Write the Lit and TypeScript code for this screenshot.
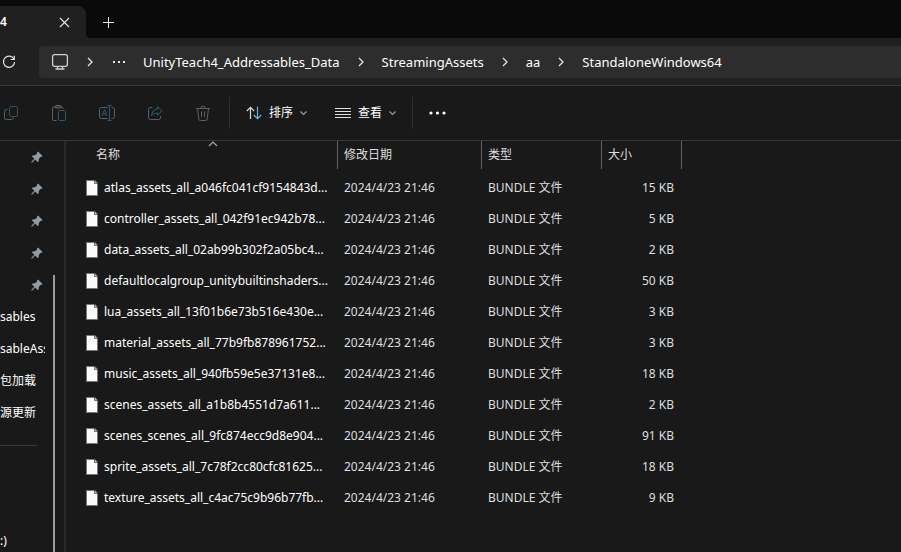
import { LitElement, html, css, svg } from "lit";
import { customElement } from "lit/decorators.js";

interface FileEntry {
  name: string;
  size: string;
}

const FILES: FileEntry[] = [
  { name: "atlas_assets_all_a046fc041cf9154843d...", size: "15 KB" },
  { name: "controller_assets_all_042f91ec942b78...", size: "5 KB" },
  { name: "data_assets_all_02ab99b302f2a05bc4...", size: "2 KB" },
  { name: "defaultlocalgroup_unitybuiltinshaders...", size: "50 KB" },
  { name: "lua_assets_all_13f01b6e73b516e430e...", size: "3 KB" },
  { name: "material_assets_all_77b9fb878961752...", size: "3 KB" },
  { name: "music_assets_all_940fb59e5e37131e8...", size: "18 KB" },
  { name: "scenes_assets_all_a1b8b4551d7a611...", size: "2 KB" },
  { name: "scenes_scenes_all_9fc874ecc9d8e904...", size: "91 KB" },
  { name: "sprite_assets_all_7c78f2cc80cfc81625...", size: "18 KB" },
  { name: "texture_assets_all_c4ac75c9b96b77fb...", size: "9 KB" },
];

const chevronRight = html`<svg class="chev" width="8" height="10" viewBox="0 0 8 10">
  <path d="M2 1 L6 5 L2 9" fill="none" stroke="#e6e6e6" stroke-width="1.3" />
</svg>`;

const chevronDown = html`<svg width="7" height="6" viewBox="0 0 7 6">
  <path d="M0.5 1.5 L3.5 4.5 L6.5 1.5" fill="none" stroke="#9a9a9a" stroke-width="1.2" />
</svg>`;

const icon = (label: string, body: unknown) => html`<button class="tool" aria-label=${label} disabled>
  <svg width="18" height="18" viewBox="0 0 18 18" fill="none" stroke="#606060" stroke-width="1">${body}</svg>
</button>`;

const pin = html`<svg class="pin" width="12" height="12" viewBox="0 0 12 12">
  <path d="M7 0.5 L11.5 5 L10.4 6 L9.4 6 L7.8 8 L7.6 10.4 L6.6 11 L4.2 8.6 L1 11.8 L0.2 11 L3.4 7.8 L1 5.4 L1.6 4.4 L4.2 4.2 L6.2 2.6 L6 1.4 Z" fill="#939da8" />
</svg>`;

const fileIcon = html`<svg class="file-icon" width="12" height="16" viewBox="0 0 12 16">
  <path d="M0.5 0.5 H8 L11.5 4 V15.5 H0.5 Z" fill="#fafafa" stroke="#777" />
  <path d="M8.5 0 V3.5 H12 Z" fill="#c9c9c9" stroke="#555" stroke-width="0.8" />
</svg>`;

@customElement("app-root")
export class AppRoot extends LitElement {
  static styles = css`
    :host {
      display: flex;
      flex-direction: column;
      min-height: 100vh;
      overflow: hidden;
      background: #191919;
      color: #fff;
      font-family: "Noto Sans", "Noto Sans CJK SC", sans-serif;
      font-size: 12px;
      line-height: 16px;
    }
    * {
      box-sizing: border-box;
    }
    svg {
      display: block;
      flex: none;
    }
    button {
      display: flex;
      align-items: center;
      padding: 0;
      border: 0;
      background: none;
      color: inherit;
      font: inherit;
    }
    .tabs {
      display: flex;
      align-items: flex-end;
      height: 38px;
      background: #0a0a0a;
    }
    .tab {
      display: flex;
      align-items: center;
      justify-content: space-between;
      width: 86px;
      height: 32px;
      padding-right: 16px;
      border-top-right-radius: 8px;
      background: #202020;
      font-weight: 600;
    }
    .flare {
      width: 4px;
      height: 4px;
      background: radial-gradient(circle at 100% 0, #0a0a0a 4px, #202020 4px);
    }
    .new-tab {
      width: 36px;
      height: 32px;
      justify-content: center;
    }
    .address-row {
      display: flex;
      align-items: center;
      height: 48px;
      padding-left: 2px;
      border-bottom: 1px solid #3a3a3a;
      background: #202020;
    }
    .address {
      display: flex;
      flex: 1;
      align-items: center;
      height: 32px;
      margin-left: 23px;
      padding-left: 12px;
      border-radius: 4px 0 0 4px;
      background: #2d2d2d;
      font-size: 13px;
    }
    .address a {
      color: inherit;
      text-decoration: none;
    }
    .chev {
      margin: 0 17px;
    }
    .dots {
      margin: 0 18px 0 2px;
    }
    .toolbar {
      display: flex;
      align-items: center;
      height: 55px;
      border-bottom: 1px solid #3a3a3a;
    }
    .tool {
      width: 48px;
      height: 32px;
      justify-content: center;
    }
    .tools {
      display: flex;
      margin: 0 2px 0 -13px;
    }
    .menu {
      gap: 7px;
      height: 32px;
      margin-left: 16px;
    }
    .menu + .menu {
      margin-left: 28px;
    }
    .rule {
      width: 1px;
      height: 32px;
      background: #2f2f2f;
    }
    .rule.end,
    .more {
      margin-left: 16px;
    }
    .body {
      display: flex;
      flex: 1;
    }
    .side {
      display: flex;
      width: 66px;
      border-right: 2px solid #292929;
    }
    .side-list {
      width: 45px;
      overflow: hidden;
      white-space: nowrap;
    }
    .side-item {
      display: flex;
      align-items: center;
      height: 32px;
    }
    .pin {
      margin-left: 31px;
    }
    .side hr {
      width: 37px;
      height: 1px;
      margin: 16px 0 79px;
      border: 0;
      background: #3a3a3a;
    }
    .thumb {
      width: 2px;
      margin: 134px 0 0 8px;
      background: #9a9a9a;
    }
    table {
      align-self: flex-start;
      table-layout: fixed;
      width: 616px;
      border-collapse: separate;
      border-spacing: 0;
      color: #dedede;
    }
    .c-name {
      width: 272px;
    }
    .c-date {
      width: 144px;
    }
    .c-type {
      width: 120px;
    }
    .c-size {
      width: 80px;
    }
    th {
      position: relative;
      height: 28px;
      padding: 0 6px;
      border-right: 1px solid #636363;
      text-align: left;
      font-weight: 400;
    }
    th.name {
      padding-left: 30px;
    }
    .sort {
      position: absolute;
      top: 0;
      left: 142px;
    }
    td {
      height: 31px;
      padding: 0 8px 0 6px;
      white-space: nowrap;
    }
    td.size {
      text-align: right;
    }
    .gap td {
      height: 3px;
    }
    .file {
      display: flex;
      align-items: center;
      gap: 6px;
      margin-right: -8px;
      padding-left: 14px;
      color: #fff;
    }
  `;

  render() {
    return html`
      <div class="tabs">
        <div class="tab">
          <span>4</span>
          <button aria-label="关闭">
            <svg width="11" height="11" viewBox="0 0 11 11"><path d="M1 1 L10 10 M10 1 L1 10" stroke="#e6e6e6" stroke-width="1.1" /></svg>
          </button>
        </div>
        <span class="flare"></span>
        <button class="new-tab" aria-label="新建标签页">
          <svg width="11" height="11" viewBox="0 0 11 11"><path d="M0 5.5 H11 M5.5 0 V11" stroke="#e6e6e6" /></svg>
        </button>
      </div>

      <div class="address-row">
        <button aria-label="刷新">
          <svg width="14" height="14" viewBox="0 0 14 14" fill="none" stroke="#e0e0e0" stroke-width="1.2">
            <path d="M12 4.2 A5.6 5.6 0 1 0 12.6 7" />
            <path d="M12.3 0.8 V4.5 H8.6" />
          </svg>
        </button>
        <nav class="address" aria-label="路径">
          <svg width="18" height="16" viewBox="0 0 18 16" fill="none" stroke="#d0d0d0" stroke-width="1.3">
            <rect x="1.6" y="0.7" width="14.8" height="11.6" rx="2" />
            <path d="M6.5 12.5 V15 M11.5 12.5 V15 M4.5 15 H13.5" />
          </svg>
          ${chevronRight}
          <svg class="dots" width="12" height="2" viewBox="0 0 12 2"><path d="M0 0h2v2H0zM5 0h2v2H5zM10 0h2v2h-2z" fill="#e6e6e6" /></svg>
          <a href="#data">UnityTeach4_Addressables_Data</a>
          ${chevronRight}
          <a href="#streaming">StreamingAssets</a>
          ${chevronRight}
          <a href="#aa">aa</a>
          ${chevronRight}
          <a href="#windows">StandaloneWindows64</a>
        </nav>
      </div>

      <div class="toolbar">
        <div class="tools">
          ${icon("复制", svg`<path d="M5.5 5.5 H4.5 a2 2 0 0 0 -2 2 V13.5 a2 2 0 0 0 2 2 H9.5 a2 2 0 0 0 2 -2" /><rect x="7.5" y="2.5" width="8" height="10" rx="2" stroke="#2c5873" />`)}
          ${icon("粘贴", svg`<path d="M6.5 16.5 H3.5 a1 1 0 0 1 -1 -1 V4 a1 1 0 0 1 1 -1 H12 a1 1 0 0 1 1 1 V5" /><rect x="5" y="1.5" width="6" height="2.5" rx="1" /><rect x="8.5" y="6.5" width="7" height="10" rx="1" stroke="#2c5873" />`)}
          ${icon("重命名", svg`<path d="M9.5 3.5 H3.5 a2 2 0 0 0 -2 2 V12.5 a2 2 0 0 0 2 2 H9.5 M13.5 3.5 H14.5 a2 2 0 0 1 2 2 V12.5 a2 2 0 0 1 -2 2 H13.5" /><path d="M4 12 L6.5 5.5 L9 12 M5 10 H8 M11.5 1.5 V16.5 M9.5 1.5 H13.5 M9.5 16.5 H13.5" stroke="#2c5873" />`)}
          ${icon("共享", svg`<path d="M6.5 3.5 H4.5 a2 2 0 0 0 -2 2 V13.5 a2 2 0 0 0 2 2 H12.5 a2 2 0 0 0 2 -2 V12" /><path d="M11.5 2.5 L16 7 L11.5 11 V9 C9 9 7 9.8 5.5 11.5 C6 8 7.6 5.2 11.5 5 Z" stroke="#2c5873" />`)}
          ${icon("删除", svg`<path d="M2 4.5 H16 M3.5 4.5 L4.8 15 a1.5 1.5 0 0 0 1.5 1.5 H11.7 a1.5 1.5 0 0 0 1.5 -1.5 L14.5 4.5 M7 4 a2 2 0 0 1 4 0 M7.5 7.5 V13 M10.5 7.5 V13" />`)}
        </div>
        <span class="rule"></span>
        <button class="menu">
          <svg width="16" height="14" viewBox="0 0 16 14" fill="none" stroke-width="1.2">
            <path d="M4.5 13 V1.5 M0.8 5 L4.5 1.3 L8.2 5" stroke="#d8d8d8" />
            <path d="M11.5 0.5 V12.5 M7.8 9 L11.5 12.7 L15.2 9" stroke="#5cb8ee" />
          </svg>
          排序 ${chevronDown}
        </button>
        <button class="menu">
          <svg width="16" height="11" viewBox="0 0 16 11"><path d="M0 0.5h16M0 3.5h16M0 6.5h16M0 9.5h16" stroke="#e0e0e0" /></svg>
          查看 ${chevronDown}
        </button>
        <span class="rule end"></span>
        <button class="more" aria-label="更多">
          <svg width="17" height="4" viewBox="0 0 17 4" fill="#fff"><circle cx="2" cy="2" r="1.6" /><circle cx="8.5" cy="2" r="1.6" /><circle cx="15" cy="2" r="1.6" /></svg>
        </button>
      </div>

      <div class="body">
        <aside class="side">
          <div class="side-list">
            ${[1, 2, 3, 4, 5].map(() => html`<div class="side-item">${pin}</div>`)}
            ${["sables", "sableAss", "包加载", "源更新"].map((t) => html`<div class="side-item">${t}</div>`)}
            <hr />
            <div class="side-item">:)</div>
          </div>
          <span class="thumb"></span>
        </aside>
        <table>
          <colgroup>
            <col class="c-name" /><col class="c-date" /><col class="c-type" /><col class="c-size" />
          </colgroup>
          <thead>
            <tr>
              <th class="name">名称
                <svg class="sort" width="10" height="6" viewBox="0 0 10 6"><path d="M1 5 L5 1 L9 5" fill="none" stroke="#a8a8a8" stroke-width="1.2" /></svg>
              </th>
              <th>修改日期</th>
              <th>类型</th>
              <th>大小</th>
            </tr>
          </thead>
          <tbody>
            <tr class="gap"><td colspan="4"></td></tr>
            ${FILES.map(
              (f) => html`<tr>
                <td><div class="file">${fileIcon}<span>${f.name}</span></div></td>
                <td>2024/4/23 21:46</td>
                <td>BUNDLE 文件</td>
                <td class="size">${f.size}</td>
              </tr>`
            )}
          </tbody>
        </table>
      </div>
    `;
  }
}
